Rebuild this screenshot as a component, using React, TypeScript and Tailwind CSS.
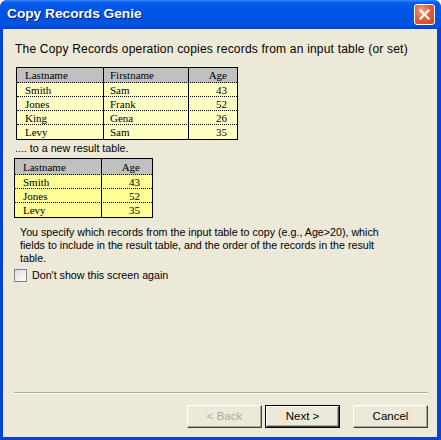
import React from "react";

const sans = { fontFamily: '"Liberation Sans", Arial, sans-serif' };
const serif = { fontFamily: '"Liberation Serif", "Times New Roman", serif' };

function Table1() {
  const rows = [
    ["Smith", "Sam", "43"],
    ["Jones", "Frank", "52"],
    ["King", "Gena", "26"],
    ["Levy", "Sam", "35"],
  ];
  return (
    <div className="ml-[1px] w-[222px] border border-black text-[11px] text-black" style={serif}>
      <div className="grid grid-cols-[87px_85px_48px] h-[15px] bg-[#c0c0c0] leading-[15px] border-b border-dotted border-black">
        <div className="pl-[8px] border-r border-black">Lastname</div>
        <div className="pl-[6px] border-r border-black">Firstname</div>
        <div className="pr-[10px] text-right">Age</div>
      </div>
      {rows.map((r, i) => (
        <div
          key={i}
          className={`grid grid-cols-[87px_85px_48px] h-[14px] leading-[14px] bg-[#ffffc4] ${i < rows.length - 1 ? "border-b border-dotted border-black" : ""}`}
        >
          <div className="pl-[8px] border-r border-black">{r[0]}</div>
          <div className="pl-[6px] border-r border-black">{r[1]}</div>
          <div className="pr-[10px] text-right">{r[2]}</div>
        </div>
      ))}
    </div>
  );
}

function Table2() {
  const rows = [
    ["Smith", "43"],
    ["Jones", "52"],
    ["Levy", "35"],
  ];
  return (
    <div className="ml-[-1px] w-[139px] border border-black text-[11px] text-black" style={serif}>
      <div className="grid grid-cols-[87px_50px] h-[16px] bg-[#c0c0c0] leading-[16px] border-b border-dotted border-black">
        <div className="pl-[8px] border-r border-black">Lastname</div>
        <div className="pr-[12px] text-right">Age</div>
      </div>
      {rows.map((r, i) => (
        <div
          key={i}
          className={`grid grid-cols-[87px_50px] h-[14px] leading-[14px] bg-[#ffff96] ${i < rows.length - 1 ? "border-b border-dotted border-black" : ""}`}
        >
          <div className="pl-[8px] border-r border-black">{r[0]}</div>
          <div className="pr-[12px] text-right">{r[1]}</div>
        </div>
      ))}
    </div>
  );
}

function Button({ label, disabled, def }: { label: string; disabled?: boolean; def?: boolean }) {
  return (
    <div className={`w-[75px] h-[23px] ${def ? "border border-black" : ""}`}>
      <div
        className={`w-full h-full flex items-center justify-center bg-[#ece9d8] border-t border-l border-t-white border-l-white border-b border-r border-b-[#404040] border-r-[#404040] shadow-[inset_-1px_-1px_0_#aca899] text-[11.5px] ${disabled ? "text-[#aca899]" : "text-black"}`}
        style={sans}
      >
        {label}
      </div>
    </div>
  );
}

export default function App() {
  return (
    <div className="w-[441px] h-[440px] flex flex-col bg-[#0842d6] rounded-t-[7px] overflow-hidden" style={sans}>
      {/* Title bar */}
      <div className="h-[29px] flex items-center justify-between pl-[7px] pr-[6px] rounded-t-[7px] bg-[linear-gradient(to_bottom,#3d8bf7_0%,#0a5fef_8%,#0257e8_20%,#0054e3_50%,#0052df_85%,#0045cf_100%)]">
        <span className="text-white font-bold text-[13.7px] [text-shadow:1px_1px_0_#0a1883]">
          Copy Records Genie
        </span>
        <div className="w-[21px] h-[21px] rounded-[3px] border border-white bg-[radial-gradient(circle_at_35%_30%,#f0a587_0%,#e2603a_45%,#c9431c_100%)] flex items-center justify-center">
          <svg width="11" height="11" viewBox="0 0 11 11">
            <path d="M1.5 1.5 L9.5 9.5 M9.5 1.5 L1.5 9.5" stroke="white" strokeWidth="2.2" strokeLinecap="square" />
          </svg>
        </div>
      </div>
      {/* Body */}
      <div className="flex-1 ml-[3px] mr-[4px] mb-[3px] bg-[#ece9d8] flex flex-col pl-[12px] pr-[9px] text-black">
        <div className="mt-[13px] text-[12px] leading-[14px] tracking-[0.2px]">
          The Copy Records operation copies records from an input table (or set)
        </div>
        <div className="mt-[11px]">
          <Table1 />
        </div>
        <div className="mt-[1px] text-[10.7px] leading-[14px]">.... to a new result table.</div>
        <div className="mt-[3px]">
          <Table2 />
        </div>
        <div className="mt-[8px] ml-[5px] text-[10.7px] leading-[13px]">
          You specify which records from the input table to copy (e.g., Age&gt;20), which
          <br />
          fields to include in the result table, and the order of the records in the result
          <br />
          table.
        </div>
        <div className="mt-[2px] ml-[-1px] flex items-center gap-[5px]">
          <div className="w-[13px] h-[13px] border border-[#808080] bg-[linear-gradient(135deg,#dcdcd5,#ffffff)]" />
          <span className="text-[10.7px]">Don&apos;t show this screen again</span>
        </div>
        <div className="flex-1" />
        <div className="ml-[-1px] h-[2px] border-t border-[#aca899] border-b border-b-white" />
        <div className="mt-[11px] mb-[9px] flex justify-end gap-[3px]">
          <Button label="< Back" disabled />
          <Button label="Next >" def />
          <div className="w-[7px]" />
          <Button label="Cancel" />
        </div>
      </div>
    </div>
  );
}
